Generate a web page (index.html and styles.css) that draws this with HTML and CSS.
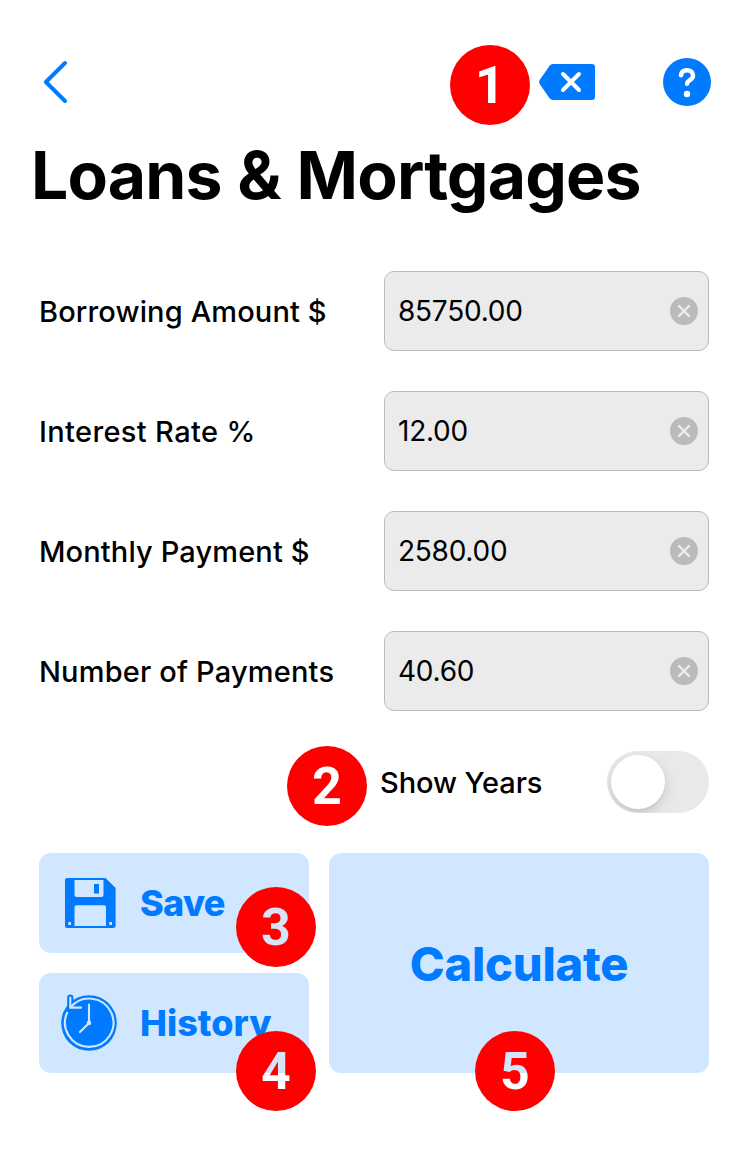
FILE: index.html
```html
<!DOCTYPE html>
<html lang="en">
<head>
<meta charset="utf-8">
<title>Loans &amp; Mortgages</title>
<link rel="stylesheet" href="styles.css">
</head>
<body>
<main class="screen">
  <header class="toolbar">
    <svg class="icon-back" width="32" height="48" viewBox="0 0 32 48"><path d="M26 5 6.900 24 26 43" fill="none" stroke="#007aff" stroke-width="4" stroke-linecap="round" stroke-linejoin="round"/></svg>
    <div class="toolbar-actions">
      <svg width="56" height="36" viewBox="0 0 56 36"><path d="M14 0H53q3 0 3 3v30q0 3-3 3H14q-2.200 0-3.600-2L.7 20Q-.5 18 .7 16L10.400 2q1.400-2 3.600-2Z" fill="#007aff"/><path d="m24 10 16 16m0-16L24 26" stroke="#fff" stroke-width="4" stroke-linecap="round"/></svg>
      <svg width="48" height="48" viewBox="0 0 48 48"><circle cx="24" cy="24" r="24" fill="#007aff"/><path d="M18 17.300C18.300 14 20.700 12.300 24 12.300c3.500 0 6 2.100 6 5.400 0 4.300-5.800 4.500-5.900 8" fill="none" stroke="#fff" stroke-width="4.500" stroke-linecap="round"/><circle cx="24" cy="36" r="3.200" fill="#fff"/></svg>
    </div>
    <span class="badge badge-1">1</span>
  </header>
  <h1 class="title">Loans &amp; Mortgages</h1>
  <section class="fields">
    <div class="row"><span class="label l1">Borrowing Amount $</span><div class="field"><span class="value">85750.00</span><svg class="clear" viewBox="0 0 28 28"><circle cx="14" cy="14" r="14"/><path d="m9 9 10 10m0-10L9 19"/></svg></div></div>
    <div class="row"><span class="label l2">Interest Rate %</span><div class="field"><span class="value">12.00</span><svg class="clear" viewBox="0 0 28 28"><circle cx="14" cy="14" r="14"/><path d="m9 9 10 10m0-10L9 19"/></svg></div></div>
    <div class="row"><span class="label l3">Monthly Payment $</span><div class="field"><span class="value">2580.00</span><svg class="clear" viewBox="0 0 28 28"><circle cx="14" cy="14" r="14"/><path d="m9 9 10 10m0-10L9 19"/></svg></div></div>
    <div class="row"><span class="label l4">Number of Payments</span><div class="field"><span class="value">40.60</span><svg class="clear" viewBox="0 0 28 28"><circle cx="14" cy="14" r="14"/><path d="m9 9 10 10m0-10L9 19"/></svg></div></div>
  </section>
  <section class="years">
    <span class="label l5">Show Years</span>
    <span class="switch"><span class="knob"></span></span>
    <span class="badge badge-2">2</span>
  </section>
  <section class="actions">
    <div class="button save">
      <svg width="56" height="56" viewBox="0 0 56 56"><path fill="#007aff" fill-rule="evenodd" d="M6 3H44.500L54.600 13V50.500Q54.600 53 52 53H6Q4 53 4 51V5Q4 3 6 3ZM13.500 5V20Q13.500 22 15.500 22H40.500Q42.500 22 42.500 20V5ZM33 9H38V18.500H33ZM13.500 51H45V32Q45 30.300 43.300 30.300H15.500Q13.500 30.300 13.500 32.300ZM7.300 47H10V50H7.300ZM48.300 47H51V50H48.300Z"/></svg>
      <span class="button-text">Save</span>
      <span class="badge badge-3"><span class="cut">3</span></span>
    </div>
    <div class="button history">
      <svg width="56" height="60" viewBox="0 0 56 60"><circle cx="28" cy="30" r="27.800" fill="#007aff"/><path d="M9.300 4.500V14.600H20" fill="none" stroke="#007aff" stroke-width="6.200" stroke-linecap="round" stroke-linejoin="round"/><path d="M9.300 14.600A24.200 24.200 0 1 1 6.500 19" fill="none" stroke="#d1e7ff" stroke-width="2.100"/><path d="M9.300 4.500V14.600H20" fill="none" stroke="#d1e7ff" stroke-width="2.100" stroke-linecap="round"/><path d="M28 11.500V30L18.900 39.100" fill="none" stroke="#d1e7ff" stroke-width="2.100" stroke-linecap="round"/><circle cx="28" cy="30" r="2.300" fill="#d1e7ff"/></svg>
      <span class="button-text history-text">History</span>
      <span class="badge badge-4"><span class="cut">4</span></span>
    </div>
    <div class="button calculate">
      <span>Calculate</span>
      <span class="badge badge-5"><span class="cut">5</span></span>
    </div>
  </section>
</main>
</body>
</html>
```
FILE: styles.css
```css
* { box-sizing: border-box; }
body { margin: 0; background: #fff; color: #000; font-family: Inter, "Liberation Sans", sans-serif; }
.screen { width: 750px; height: 1153px; padding: 58px 41px 0 39px; overflow: hidden; }
.toolbar { position: relative; display: flex; align-items: center; justify-content: space-between; height: 48px; margin-right: -2px; }
.toolbar-actions { display: flex; align-items: center; gap: 68px; }
svg { display: block; flex: none; }
.title { margin: 29px 0 0 -8px; height: 80px; line-height: 80px; font-size: 66px; font-weight: 700; letter-spacing: -0.85px; word-spacing: 1px; white-space: nowrap; }
.fields { display: grid; gap: 40px; margin-top: 56px; }
.row { display: flex; align-items: center; justify-content: space-between; height: 80px; }
.label { padding-top: 2px; font-size: 29px; font-weight: 500; line-height: 40px; white-space: nowrap; }
.l1, .l3 { letter-spacing: 0.13px; }
.l2 { letter-spacing: 0.36px; }
.l4 { letter-spacing: 0.18px; }
.l5 { letter-spacing: -0.1px; }
.field { display: flex; align-items: center; justify-content: space-between; width: 325px; height: 80px; padding: 0 10px 0 13px; background: #ebebeb; border: 1px solid #bbb; border-radius: 10px; }
.value { font-size: 28px; line-height: 40px; letter-spacing: -0.25px; }
.clear { width: 28px; height: 28px; fill: #bbb; stroke: none; }
.clear path { stroke: #ebebeb; stroke-width: 2.4; stroke-linecap: round; }
.years { position: relative; display: flex; align-items: center; justify-content: space-between; height: 62px; margin-top: 40px; padding-left: 341px; }
.switch { display: flex; align-items: center; width: 102px; height: 62px; padding: 0 4px; border-radius: 31px; background: #e9e9eb; overflow: hidden; }
.knob { width: 54px; height: 54px; border-radius: 50%; background: #fff; box-shadow: 0 5px 14px rgba(0,0,0,.13), 0 3px 2px rgba(0,0,0,.04); }
.actions { display: grid; grid-template-columns: 270px 380px; grid-template-rows: 100px 100px; gap: 20px; margin-top: 40px; }
.button { position: relative; display: flex; align-items: center; gap: 23px; padding-left: 22px; border-radius: 12px; background: #d1e7ff; color: #007aff; font-weight: 800; }
.button-text { font-size: 36px; line-height: 44px; letter-spacing: -0.7px; }
.history-text { letter-spacing: 0; }
.calculate { grid-column: 2; grid-row: 1 / 3; justify-content: center; padding: 0; font-size: 47px; letter-spacing: -0.2px; }
.badge { position: absolute; display: flex; align-items: center; justify-content: center; width: 80px; height: 80px; padding-top: 2px; border-radius: 50%; background: #f00; color: #fff; font: 700 52px/78px Roboto, sans-serif; letter-spacing: 0; }
.cut { width: 80px; text-align: center; color: transparent; background: linear-gradient(#d5e4f6 40px, #fff 40px); background-clip: text; -webkit-background-clip: text; }
.badge-1 { left: 411px; top: -13px; }
.badge-2 { left: 248px; top: -5px; }
.badge-3 { left: 197px; top: 34px; }
.badge-3 .cut { background-image: linear-gradient(#d5e4f6, #d5e4f6); }
.badge-4 { left: 197px; top: 58px; }
.badge-5 { left: 146px; top: 178px; }
```
